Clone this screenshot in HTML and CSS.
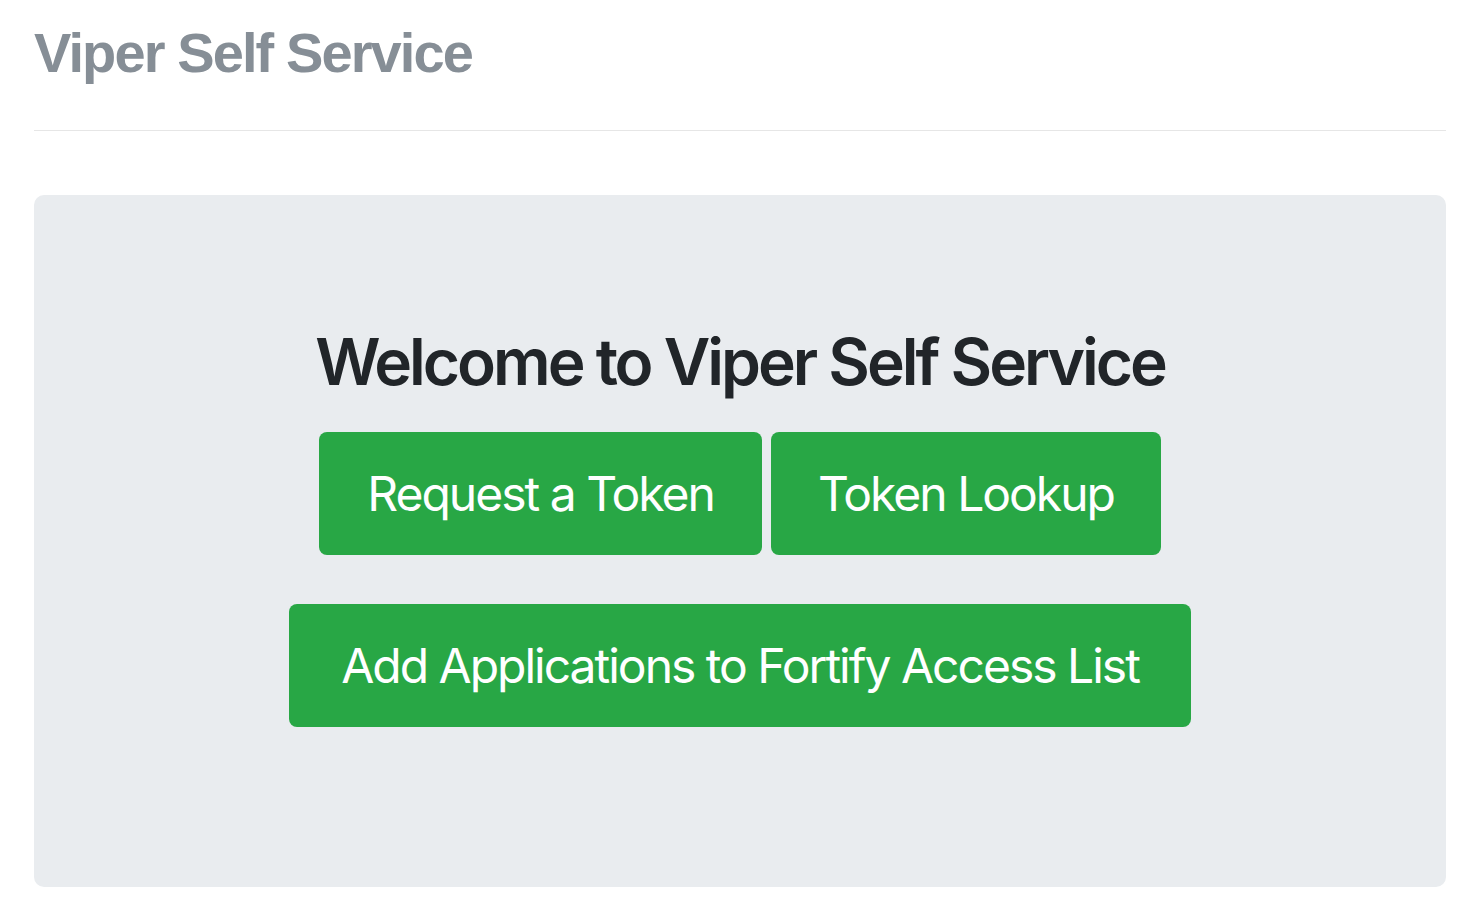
FILE: index.html
```html
<!DOCTYPE html>
<html>
<head>
<meta charset="utf-8">
<link rel="stylesheet" href="styles.css">
</head>
<body>
<div class="page">
  <header class="header">
    <h3 class="brand">Viper Self Service</h3>
  </header>
  <hr class="divider">
  <section class="jumbotron">
    <h1 class="welcome">Welcome to Viper Self Service</h1>
    <div class="btn-row">
      <a class="btn btn-req">Request a Token</a>
      <a class="btn btn-look">Token Lookup</a>
    </div>
    <div class="btn-row second">
      <a class="btn btn-add">Add Applications to Fortify Access List</a>
    </div>
  </section>
</div>
</body>
</html>
```
FILE: styles.css
```css
html, body {
  margin: 0;
  padding: 0;
  background: #ffffff;
}
.page {
  padding: 0 24px 0 34px;
}
.header {
  height: 130px;
  display: flex;
  align-items: flex-start;
}
.brand {
  margin: 0;
  padding-top: 19px;
  font-family: "Liberation Sans", Arial, sans-serif;
  font-weight: 700;
  font-size: 56px;
  letter-spacing: -1.9px;
  line-height: 1.2;
  color: #868e96;
}
.divider {
  margin: 0;
  border: 0;
  border-top: 1px solid #e6e6e6;
}
.jumbotron {
  margin-top: 64px;
  height: 692px;
  box-sizing: border-box;
  padding-top: 128px;
  background: #e9ecef;
  border-radius: 10px;
  display: flex;
  flex-direction: column;
  align-items: center;
}
.welcome {
  margin: 0;
  font-family: Inter, "Noto Sans", sans-serif;
  font-weight: 600;
  font-size: 64px;
  line-height: 78px;
  color: #212529;
  letter-spacing: -3px;
  white-space: nowrap;
}
.btn-row {
  display: flex;
  gap: 9px;
  margin-top: 31px;
}
.btn-row.second {
  margin-top: 49px;
}
.btn {
  display: flex;
  align-items: center;
  justify-content: center;
  height: 123px;
  box-sizing: border-box;
  background: #28a745;
  color: #ffffff;
  border-radius: 8px;
  font-family: Inter, "Noto Sans", sans-serif;
  font-weight: 400;
  font-size: 48px;
  line-height: 1.2;
  letter-spacing: -2px;
  white-space: nowrap;
}
.btn-req { width: 443px; }
.btn-look { width: 390px; }
.btn-add { width: 902px; }
```
